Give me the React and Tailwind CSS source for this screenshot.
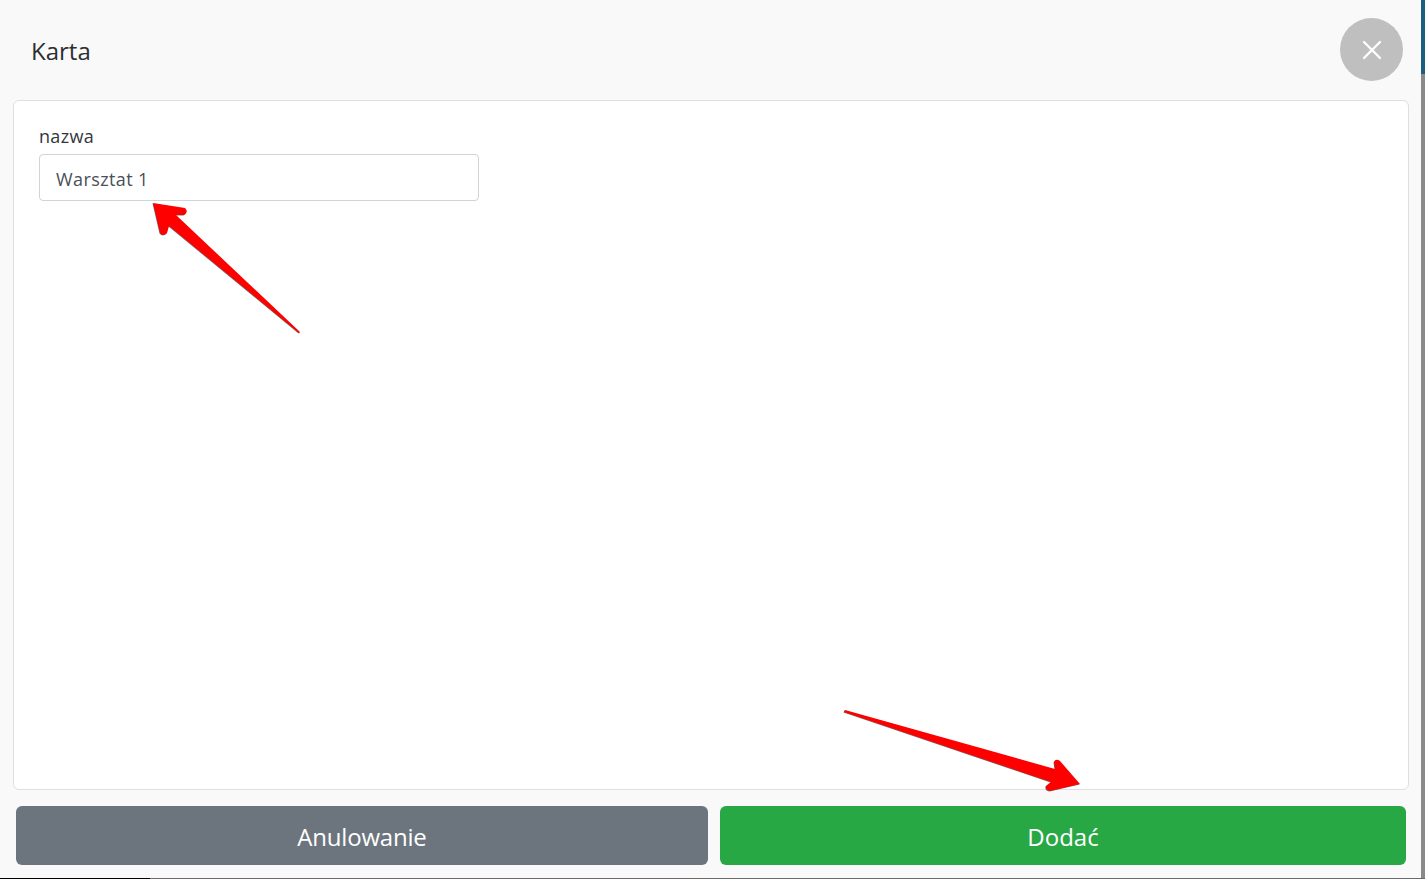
import React from 'react';
import { X } from 'lucide-react';

const FONT = "font-['Open_Sans','Noto_Sans',sans-serif]";

const TOP_ARROW = 'M153 203 L185 208 Q189 212 184 215 L176 215 L300 332 L299 333 L169 226 L167 233 Q163 237 160 233 Z';
const BOTTOM_ARROW = 'M845 710 L1055 769 L1054 762 Q1056 758 1060 761 L1080 784 L1050 791 Q1045 790 1046 786 L1051 782 L844 712 Z';

const Arrows = () => (
  <svg className="absolute top-0 left-0 pointer-events-none" width="1425" height="879" viewBox="0 0 1425 879">
    {/* dark edge under the arrows */}
    <g fill="#6f6f6f" transform="translate(-0.5 0.5)">
      <path d={TOP_ARROW} />
      <path d={BOTTOM_ARROW} />
    </g>
    <path d={TOP_ARROW} fill="#ff0000" />
    <path d={BOTTOM_ARROW} fill="#ff0000" />
  </svg>
);

const App = () => {
  return (
    <div className={`relative flex flex-col w-full h-[879px] overflow-hidden ${FONT}`}>
      <div className="flex flex-1 min-h-0">
        {/* Dialog */}
        <div className="flex flex-col w-[1421px] bg-[#f9f9f9]">
          {/* Header */}
          <div className="flex items-center justify-between h-[100px] pl-[31px] pr-[18px] pb-[2px]">
            <h1 className="text-2xl text-[#2b2f33] pt-1">Karta</h1>
            <button className="flex items-center justify-center w-[63px] h-[63px] rounded-full bg-[#bfbfbf] text-white">
              <X className="w-8 h-8 mt-px" strokeWidth={1.75} />
            </button>
          </div>

          {/* Body */}
          <div className="mx-[13px] mr-3 h-[690px] rounded-md border border-[#dfdfdf] bg-white pt-[24px] pl-[25px]">
            <label className="block text-lg leading-[23px] tracking-[0.3px] text-[#33373b] mb-[6px]">nazwa</label>
            <div className="flex items-center w-[440px] h-[47px] rounded border border-[#ced4da] bg-white pl-4 pt-0.5 text-lg tracking-[0.4px] text-[#495057]">
              Warsztat 1
            </div>
          </div>

          {/* Footer */}
          <div className="grid grid-cols-[692px_686px] gap-3 pl-4 pt-4">
            <button className="h-[59px] rounded-md bg-[#6c757d] pt-0.5 text-2xl tracking-[-0.2px] text-white">Anulowanie</button>
            <button className="h-[59px] rounded-md bg-[#28a745] pt-0.5 text-2xl text-white">Dodać</button>
          </div>
        </div>

        {/* Page behind the dialog */}
        <div className="flex flex-col flex-1">
          <div className="h-[74px] bg-[#1b5e82]" />
          <div className="flex-1 bg-[#8a8a8a]" />
        </div>
      </div>

      {/* Bottom edge */}
      <div className="flex h-px">
        <div className="w-[150px] bg-black" />
        <div className="flex-1 bg-[#6b6b6b]" />
      </div>

      <Arrows />
    </div>
  );
};

export default App;
